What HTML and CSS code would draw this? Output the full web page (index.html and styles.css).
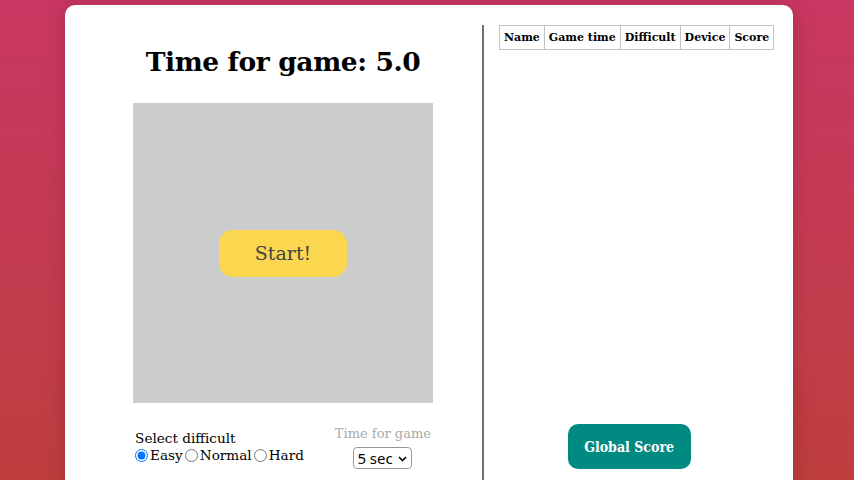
FILE: index.html
```html
<!DOCTYPE html>
<html>
<head>
<meta charset="utf-8">
<link rel="stylesheet" href="styles.css">
</head>
<body>
<div class="card">
  <div class="game-col">
    <h1 class="title">Time for game: 5.0</h1>
    <div class="board">
      <button class="start-btn">Start!</button>
    </div>
    <div class="controls">
      <div class="difficulty">
        <div class="label">Select difficult</div>
        <div class="radios">
          <label class="opt"><input type="radio" name="d" checked>Easy</label>
          <label class="opt"><input type="radio" name="d">Normal</label>
          <label class="opt"><input type="radio" name="d">Hard</label>
        </div>
      </div>
      <div class="timer">
        <div class="timer-label">Time for game</div>
        <div class="select-wrap">
          <select class="time-select">
            <option>5 sec</option>
            <option>10 sec</option>
            <option>15 sec</option>
          </select>
          <svg class="chevron" width="9" height="6" viewBox="0 0 9 6"><path d="M1 1l3.5 3.5L8 1" fill="none" stroke="#000" stroke-width="1.6"/></svg>
        </div>
      </div>
    </div>
  </div>
  <div class="score-col">
    <table class="scores">
      <tr>
        <th>Name</th>
        <th>Game time</th>
        <th>Difficult</th>
        <th>Device</th>
        <th>Score</th>
      </tr>
    </table>
    <button class="global-btn">Global Score</button>
  </div>
</div>
</body>
</html>
```

FILE: styles.css
```css
html, body {
  margin: 0;
  height: 100%;
}
body {
  background: linear-gradient(180deg, #c93762 0%, #c43b52 50%, #be3e3d 100%);
  font-family: "DejaVu Serif", serif;
  padding-top: 5px;
  box-sizing: border-box;
  overflow: hidden;
}
.card {
  margin-left: 65px;
  width: 728px;
  box-sizing: border-box;
  background: #fff;
  border-radius: 10px;
  padding: 20px 20px 20px;
  display: flex;
  box-shadow: 0 0 18px rgba(80, 20, 30, 0.25);
}
.game-col {
  width: 397px;
  box-sizing: border-box;
  padding-right: 1px;
  flex-shrink: 0;
  display: flex;
  flex-direction: column;
  align-items: center;
  padding-bottom: 12px;
}
.title {
  margin: 17px 0 0;
  font-size: 26.5px;
  line-height: 40px;
  font-weight: bold;
  color: #000;
  letter-spacing: -0.4px;
}
.board {
  margin-top: 21px;
  width: 300px;
  height: 300px;
  background: #cccccc;
  display: flex;
  align-items: center;
  justify-content: center;
}
.start-btn {
  width: 128px;
  height: 47px;
  border: none;
  border-radius: 14px;
  background: #fbd74f;
  color: #444;
  font-family: "DejaVu Serif", serif;
  font-size: 19px;
  padding: 0;
}
.controls {
  margin-top: 22px;
  display: flex;
  align-items: center;
  gap: 31px;
  font-size: 13.6px;
}
.difficulty .label {
  line-height: 16px;
}
.radios {
  display: flex;
  align-items: center;
  line-height: 18px;
}
.opt {
  display: flex;
  align-items: center;
}
.opt input {
  margin: 0 2px 0 0;
  width: 13px;
  height: 13px;
}
.opt + .opt input {
  margin-left: 2px;
}
.timer {
  display: flex;
  flex-direction: column;
  align-items: center;
  gap: 4px;
}
.timer-label {
  color: #a9a9a9;
  font-size: 13px;
  line-height: 18px;
}
.select-wrap {
  position: relative;
  display: flex;
}
.time-select {
  appearance: none;
  -webkit-appearance: none;
  box-sizing: border-box;
  width: 59px;
  font-family: "Noto Sans", sans-serif;
  font-size: 15px;
  line-height: 19px;
  height: 22px;
  border: 1px solid #999;
  border-radius: 4px;
  background: #fff;
  color: #000;
  padding: 0 0 0 3px;
}
.chevron {
  position: absolute;
  right: 5px;
  top: 9px;
  pointer-events: none;
}
.score-col {
  flex: 1;
  border-left: 2px solid #707070;
  display: flex;
  flex-direction: column;
  align-items: center;
}
.scores {
  align-self: flex-start;
  margin-left: 15px;
  border-collapse: collapse;
  font-size: 11px;
}
.scores th {
  border: 1px solid #c4c4c4;
  height: 23px;
  padding: 0 4px;
  font-weight: bold;
  white-space: nowrap;
}
.global-btn {
  margin-top: auto;
  margin-bottom: 12px;
  width: 123px;
  height: 45px;
  border: none;
  border-radius: 10px;
  background: #008a82;
  color: #fff;
  font-family: "DejaVu Serif Condensed", "DejaVu Serif", serif;
  font-weight: bold;
  font-size: 14px;
  padding: 0;
}
```
